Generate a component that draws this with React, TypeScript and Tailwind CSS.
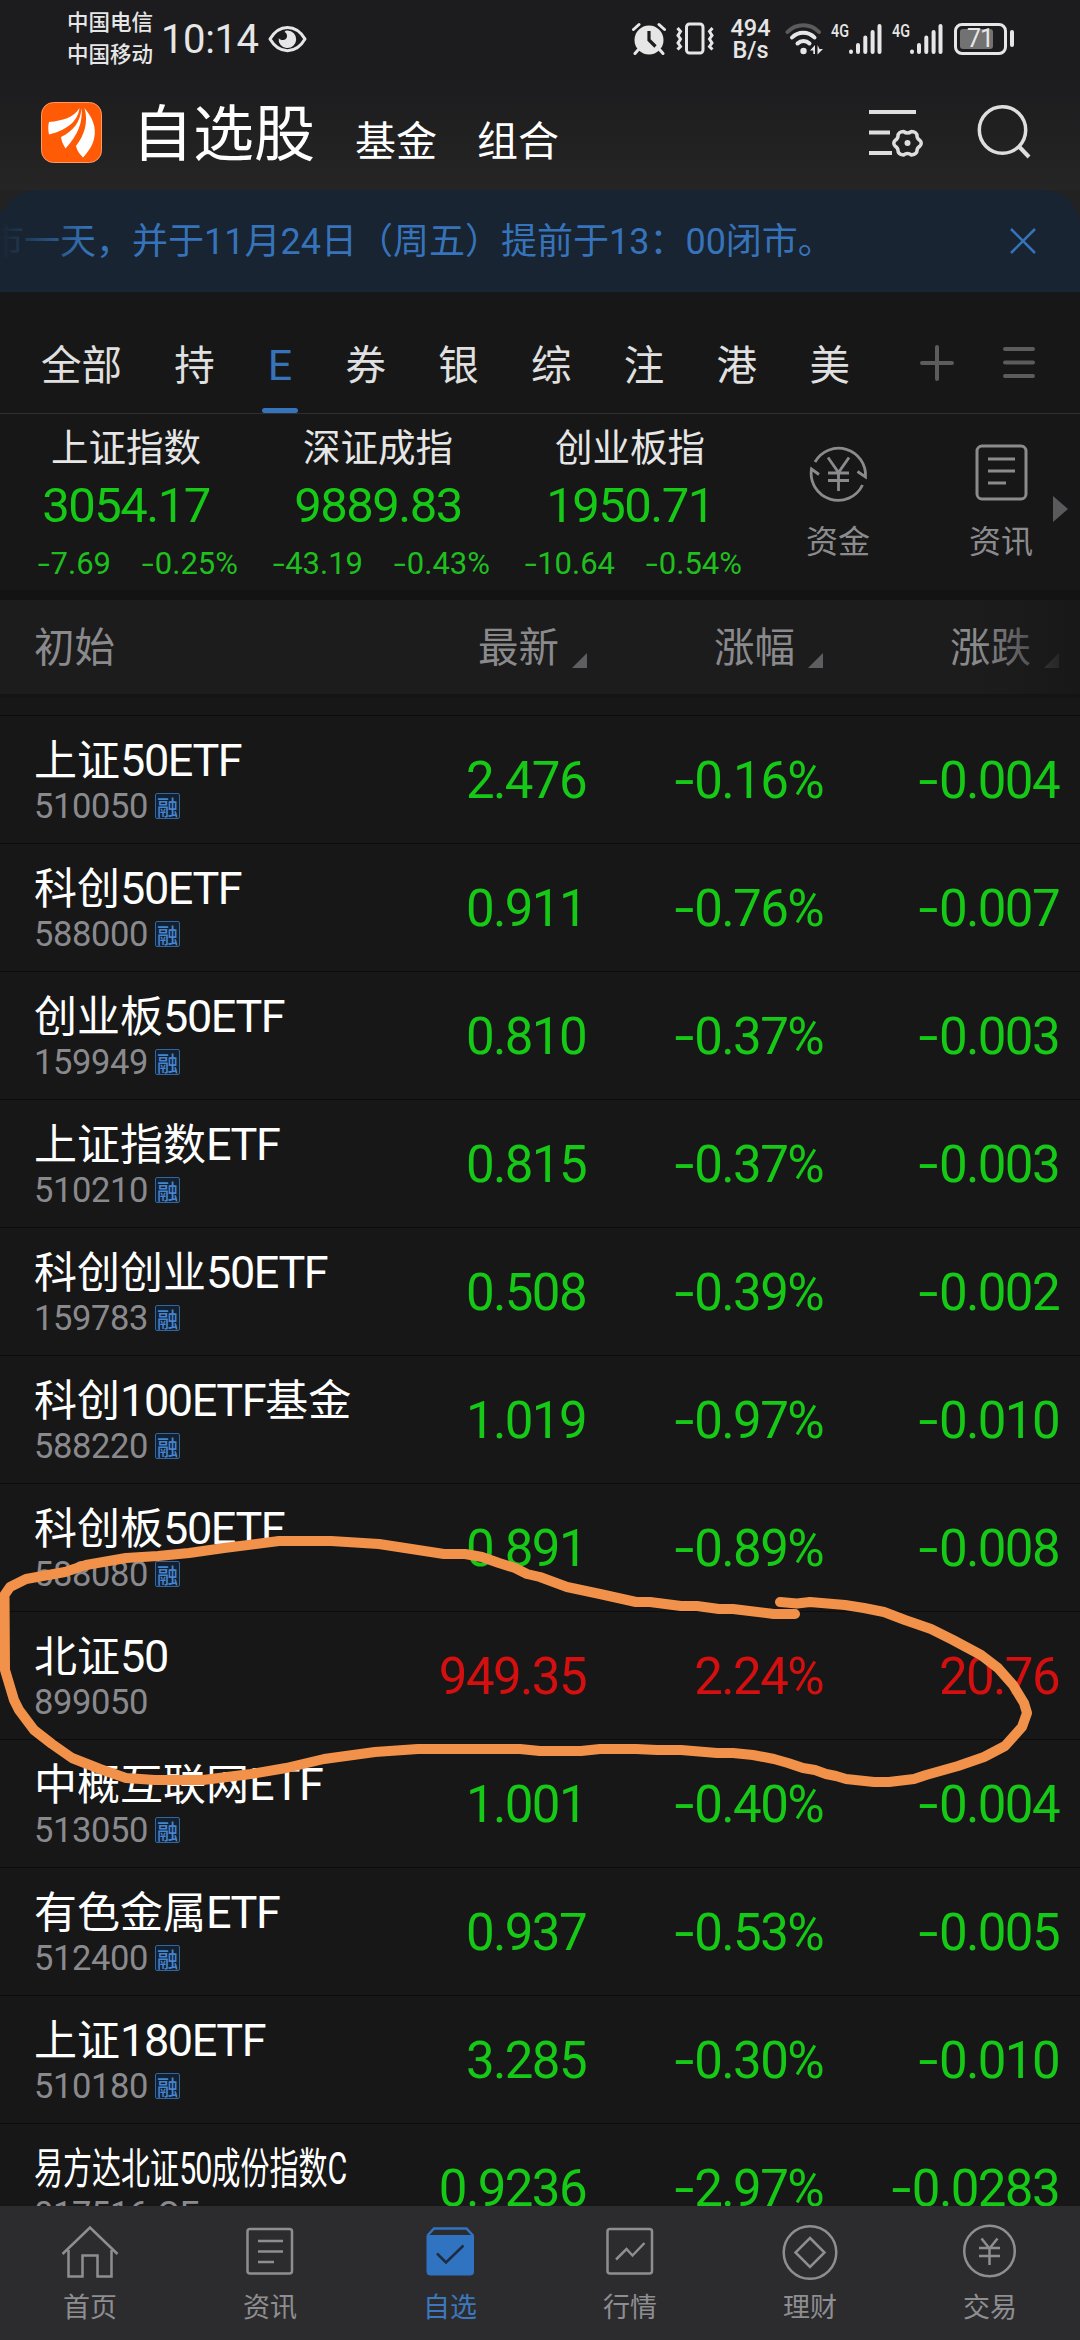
import type { ReactNode } from "react";
import clsx from "clsx";

type Quote = {
  name: string;
  code: string;
  margin?: boolean;
  last: string;
  pct: string;
  diff: string;
  up?: boolean;
  squeeze?: boolean;
};

const QUOTES: Quote[] = [
  { name: "上证50ETF", code: "510050", margin: true, last: "2.476", pct: "-0.16%", diff: "-0.004" },
  { name: "科创50ETF", code: "588000", margin: true, last: "0.911", pct: "-0.76%", diff: "-0.007" },
  { name: "创业板50ETF", code: "159949", margin: true, last: "0.810", pct: "-0.37%", diff: "-0.003" },
  { name: "上证指数ETF", code: "510210", margin: true, last: "0.815", pct: "-0.37%", diff: "-0.003" },
  { name: "科创创业50ETF", code: "159783", margin: true, last: "0.508", pct: "-0.39%", diff: "-0.002" },
  { name: "科创100ETF基金", code: "588220", margin: true, last: "1.019", pct: "-0.97%", diff: "-0.010" },
  { name: "科创板50ETF", code: "588080", margin: true, last: "0.891", pct: "-0.89%", diff: "-0.008" },
  { name: "北证50", code: "899050", last: "949.35", pct: "2.24%", diff: "20.76", up: true },
  { name: "中概互联网ETF", code: "513050", margin: true, last: "1.001", pct: "-0.40%", diff: "-0.004" },
  { name: "有色金属ETF", code: "512400", margin: true, last: "0.937", pct: "-0.53%", diff: "-0.005" },
  { name: "上证180ETF", code: "510180", margin: true, last: "3.285", pct: "-0.30%", diff: "-0.010" },
  { name: "易方达北证50成份指数C", code: "017516.OF", last: "0.9236", pct: "-2.97%", diff: "-0.0283", squeeze: true },
];

const INDEXES = [
  { name: "上证指数", value: "3054.17", diff: "-7.69", pct: "-0.25%" },
  { name: "深证成指", value: "9889.83", diff: "-43.19", pct: "-0.43%" },
  { name: "创业板指", value: "1950.71", diff: "-10.64", pct: "-0.54%" },
];

const GROUPS = ["全部", "持", "E", "券", "银", "综", "注", "港", "美"];

// ---------------------------------------------------------------------
// Status bar
// ---------------------------------------------------------------------
function Signal() {
  return (
    <div className="flex h-8 items-start">
      <span className="w-[17px] origin-left scale-x-[0.8] font-['Roboto',sans-serif] text-[18px] leading-[15px] font-medium">
        4G
      </span>
      <svg width="34" height="32" viewBox="0 0 34 32" stroke="#e6e6e6" strokeWidth="4" strokeLinecap="round">
        <path d="M3 28.5v.5M10 22v7M17.3 14.5V29M24.6 9v20M31.5 3v26" />
      </svg>
    </div>
  );
}

function StatusBar() {
  return (
    <div className="flex h-[76px] shrink-0 items-center pt-[1px] pl-[67px] text-[#e6e6e6]">
      <div className="-mt-[3px] w-[94px] text-[21.5px] leading-8 font-medium">
        <div>中国电信</div>
        <div>中国移动</div>
      </div>
      <div className="w-[107px] pt-[3px] font-['Roboto',sans-serif] text-[40px] leading-none tracking-[-0.4px]">10:14</div>
      <svg width="39" height="28" viewBox="0 0 39 28" fill="none">
        <path d="M2 14C11 -1.500 28 -1.500 37 14C28 29.500 11 29.500 2 14z" stroke="#e6e6e6" strokeWidth="3" strokeLinejoin="round" />
        <path d="M19.500 5.500a8.800 8.800 0 1 1-8.800 7.500c2 3.400 8.800 2.600 8.300-2.500-.2-2-1.200-3-2.500-3.600.8-.9 1.700-1.400 3-1.400z" fill="#e6e6e6" />
      </svg>

      <div className="ml-[325px] flex items-center">
        <svg width="34" height="33" viewBox="0 0 34 33" fill="none">
          <circle cx="17" cy="18" r="14.500" fill="#e6e6e6" />
          <path d="M1.500 7.500L7 2.500M32.500 7.500L27 2.500M6 28l-3 3.500M28 28l3 3.500" stroke="#e6e6e6" strokeWidth="3" strokeLinecap="round" />
          <path d="M17 9v9l6.500 6.500" stroke="#1d1d1f" strokeWidth="3.200" />
        </svg>
        <svg className="ml-[10px]" width="38" height="33" viewBox="0 0 38 33" fill="none" stroke="#e6e6e6" strokeWidth="3">
          <rect x="10.500" y="2" width="16.500" height="29" rx="3" />
          <path d="M1.500 6l3 3.500-2.500 4 2.500 3.500-2.500 4 2.500 3.500-3 3M36.500 6l-3 3.500 2.500 4-2.500 3.500 2.500 4-2.500 3.500 3 3" />
        </svg>
        <div className="ml-[15px] w-[43px] text-center font-['Roboto',sans-serif] text-[23.5px] leading-[22px] font-medium">
          <div>494</div>
          <div>B/s</div>
        </div>
        <svg className="ml-[13px]" width="40" height="34" viewBox="0 0 40 34" fill="none" strokeLinecap="round">
          <path d="M2.500 10C11 1 25.500 1 34 10" stroke="#5b5b5b" strokeWidth="4" />
          <path d="M7 15.500c6-6.500 16.500-6.500 22.500 0" stroke="#e6e6e6" strokeWidth="4" />
          <path d="M12.500 21.500c3.500-3.500 8.500-3.500 12 0" stroke="#e6e6e6" strokeWidth="4" />
          <circle cx="18.500" cy="29" r="3.200" fill="#e6e6e6" />
          <path d="M30 23v9h-1.700v-3.500H25zM32.500 23v9.500l5.500-5.500h-3.500z" fill="#e6e6e6" />
        </svg>
        <div className="ml-[6px] flex gap-[10px]">
          <Signal />
          <Signal />
        </div>
        <div className="ml-[11px] flex items-center gap-[3px]">
          <div className="flex h-8 w-[53px] items-center rounded-lg border-[3px] border-[#e6e6e6] p-[3px]">
            <div className="flex h-full w-[33px] items-center justify-end rounded-[3px] bg-[#727272]">
              <span className="font-['Roboto',sans-serif] text-[25px] leading-none tracking-[-1px]">71</span>
            </div>
          </div>
          <div className="h-[17px] w-1 rounded-full bg-[#e6e6e6]" />
        </div>
      </div>
    </div>
  );
}

// ---------------------------------------------------------------------
// Title bar
// ---------------------------------------------------------------------
function Logo() {
  return (
    <svg width="61" height="61" viewBox="0 0 61 61">
      <rect x=".5" y=".5" width="60" height="60" rx="12" fill="#ff5a05" stroke="#ff9a63" />
      <g fill="#fff">
        <path d="M38.500 6C37 18 28 27.500 8 32.500C7 28 7 23.500 8 20C22 18.500 32 16 38.500 6z" />
        <path d="M40.500 6C42 20 37 33 24.500 46.500C22 42.500 20.500 39 20 35C32 29.500 39.500 20 40.500 6z" />
        <path d="M43.500 6C51 15 56 25 53 37C51.500 44 47 50 42 55.500C38.500 52 36 48.500 35 44C43.500 33 47.500 20 43.500 6z" />
      </g>
    </svg>
  );
}

function TitleBar() {
  return (
    <div className="flex h-[114px] shrink-0 items-start pl-[41px] text-white">
      <div className="pt-[26px]">
        <Logo />
      </div>
      <div className="-mt-[3px] ml-[30px] flex items-baseline">
        <h1 className="text-[61px] leading-[114px]">自选股</h1>
        <span className="ml-[40px] text-[41px]">基金</span>
        <span className="ml-[40px] text-[41px]">组合</span>
      </div>
      <svg className="mt-[33px] ml-[310px]" width="54" height="50" viewBox="0 0 54 50" fill="none" stroke="#dedede">
        <path d="M0 3h47M0 23.500h21M0 44h23" strokeWidth="4" />
        <path
          d="M34.500 22.500q4 3 8 0c3.500 0 5.500 2 5.500 4.500q0 2.500 3 4.500c1.600 1.500 1.600 4 0 5.500q-3 2-3 4.500c0 2.500-2.500 4-5.500 4.500q-4-3-8 0c-3.500-.5-5.500-2-5.500-4.500q0-2.500-3-4.500c-1.600-1.500-1.600-4 0-5.500q3-2 3-4.500c0-2.500 2-4.500 5.500-4.500z"
          strokeWidth="3.500"
          strokeLinejoin="round"
        />
        <circle cx="38.500" cy="34" r="3" fill="#dedede" stroke="none" />
      </svg>
      <svg className="mt-[29px] ml-[54px]" width="54" height="54" viewBox="0 0 54 54" fill="none" stroke="#dedede">
        <circle cx="25.500" cy="25" r="23.200" strokeWidth="3.500" />
        <path d="M41.500 41L52 52" strokeWidth="4" />
      </svg>
    </div>
  );
}

function Notice() {
  return (
    <div className="bg-[#222]">
      <div className="flex h-[102px] items-center rounded-t-[36px] bg-[#182431] text-[#3673ba]">
        <div className="relative w-[960px] overflow-hidden">
          <p className="-ml-[12px] pt-[1px] font-['Roboto','Noto_Sans_CJK_SC',sans-serif] text-[36px] leading-[60px] whitespace-nowrap">
            市一天，并于11月24日（周五）提前于13：00闭市。
          </p>
          <div className="absolute inset-y-0 left-0 w-[90px] bg-linear-to-r from-[#182431] to-[#18243100]" />
        </div>
        <svg className="ml-[50px]" width="26" height="26" viewBox="0 0 26 26" stroke="#3673ba" strokeWidth="2.500">
          <path d="M1 1l24 24M25 1L1 25" />
        </svg>
      </div>
    </div>
  );
}

// ---------------------------------------------------------------------
// Watchlist groups and index strip
// ---------------------------------------------------------------------
function GroupTabs() {
  return (
    <div className="flex h-[122px] shrink-0 border-b border-[#303030] pt-[22px] pl-[41px] text-[#e0e0e0]">
      <div className="flex gap-[52.300px]">
        {GROUPS.map((g) => (
          <div
            key={g}
            className={clsx(
              "flex flex-col items-center text-[40.500px]",
              g === "E" && "w-[26px] font-['Roboto',sans-serif] text-[#3673ba]"
            )}
          >
            <span className={clsx("h-[94px]", g === "E" ? "text-[43px] leading-[102px]" : "leading-[97px]")}>{g}</span>
            {g === "E" && <i className="block h-[5px] w-[36px] shrink-0 rounded-full bg-[#3673ba]" />}
          </div>
        ))}
      </div>
      <svg className="mt-[31px] ml-[69px]" width="36" height="36" viewBox="0 0 36 36" stroke="#5c5c5c" strokeWidth="4" strokeLinecap="round">
        <path d="M18 2v32M3 18h30" />
      </svg>
      <svg className="mt-[31px] ml-[47px]" width="34" height="36" viewBox="0 0 34 36" stroke="#5c5c5c" strokeWidth="4" strokeLinecap="round">
        <path d="M3 4h28M3 17.500h28M3 31h28" />
      </svg>
    </div>
  );
}

// Figures start with a wide minus sign
function Figure({ value }: { value: string }) {
  const negative = value.startsWith("-");
  return (
    <>
      {negative && <span className="inline-block w-[0.44em] scale-x-[1.4] text-center">-</span>}
      <span>{negative ? value.slice(1) : value}</span>
    </>
  );
}

function Shortcut({ label, children }: { label: string; children: ReactNode }) {
  return (
    <div className="flex flex-col items-center gap-[12px] pt-[29px] text-[32px] leading-[50px] text-[#8b8b8e]">
      {children}
      <span>{label}</span>
    </div>
  );
}

function IndexStrip() {
  return (
    <div className="flex h-[176px] shrink-0">
      {INDEXES.map((i) => (
        <div key={i.name} className="flex w-[252px] flex-col font-['Roboto',sans-serif]">
          <span className="pt-[8px] text-center font-['Noto_Sans_CJK_SC',sans-serif] text-[37.500px] leading-[46px] text-[#e6e6e6]">
            {i.name}
          </span>
          <span className="mt-[11px] text-center text-[49px] leading-[54px] tracking-[-1.5px] text-[#16c916]">{i.value}</span>
          <span className="mt-[14px] flex justify-end pr-[14px] text-[31px] leading-[34px] text-[#1fbf1f]">
            <span>
              <Figure value={i.diff} />
            </span>
            <span className="w-[127px] text-right">
              <Figure value={i.pct} />
            </span>
          </span>
        </div>
      ))}
      <div className="ml-[50px] flex gap-[99px]">
        <Shortcut label="资金">
          <svg width="59" height="59" viewBox="0 0 59 59" fill="none" stroke="#8b8b8e" strokeWidth="2.800">
            <path d="M6 19A27 27 0 0 1 56.500 34L48.500 28.500" />
            <path d="M53.500 42A27 27 0 0 1 2.500 26L10 31.500" />
            <path d="M19 14.500l10.500 15L40 14.500M29.500 29.500V48M19 30h21M19 37.500h21" />
          </svg>
        </Shortcut>
        <Shortcut label="资讯">
          <svg width="53" height="59" viewBox="0 0 53 59" fill="none" stroke="#8b8b8e" strokeWidth="3">
            <rect x="2" y="3" width="49" height="53" rx="5" />
            <path d="M13 16h27M13 28h27M13 40h18" />
          </svg>
        </Shortcut>
      </div>
      <svg className="mt-[82px] ml-[20px]" width="15" height="26" viewBox="0 0 15 26">
        <path d="M0 0l15 13L0 26z" fill="#5a5a5c" />
      </svg>
    </div>
  );
}

// ---------------------------------------------------------------------
// Quote table
// ---------------------------------------------------------------------
function SortHead({ label, className }: { label: string; className: string }) {
  return (
    <div className={clsx("flex items-center justify-end gap-[13px]", className)}>
      <span>{label}</span>
      <svg className="mt-[30px]" width="15" height="15" viewBox="0 0 15 15">
        <path d="M15 0v15H0z" fill="#5e5e60" />
      </svg>
    </div>
  );
}

function TableHead() {
  return (
    <div className="relative flex h-[94px] shrink-0 items-center bg-[#1c1c1c] pb-[4px] pl-[34px] text-[40.500px] leading-[60px] text-[#8a8a8d]">
      <div className="w-[343px]">初始</div>
      <SortHead label="最新" className="w-[210px]" />
      <SortHead label="涨幅" className="w-[236px]" />
      <SortHead label="涨跌" className="w-[236px]" />
      <div className="absolute inset-y-0 right-0 w-[100px] bg-linear-to-r from-[#1a1a1a00] to-[#181818]" />
    </div>
  );
}

// Latin runs are set narrower than the Chinese ones
function QuoteName({ name, squeeze }: { name: string; squeeze?: boolean }) {
  const runs = name.split(/([0-9A-Z]+)/).filter(Boolean);
  return (
    <div
      className={clsx(
        "w-fit origin-left text-[43px] leading-[50px] whitespace-nowrap text-white",
        squeeze && "scale-x-[0.675]"
      )}
    >
      {runs.map((r) =>
        /[0-9A-Z]/.test(r) ? (
          <span key={r} className="font-['Roboto',sans-serif] text-[45px] tracking-[-1.4px]">
            {r}
          </span>
        ) : (
          <span key={r}>{r}</span>
        )
      )}
    </div>
  );
}

function Cell({ value, className }: { value: string; className: string }) {
  return (
    <div className={clsx("pt-[2px] text-right font-['Roboto',sans-serif] text-[51px] tracking-[-1.6px]", className)}>
      <Figure value={value} />
    </div>
  );
}

function QuoteRow({ q }: { q: Quote }) {
  return (
    <div className="flex h-32 shrink-0 items-center border-t border-[#0c0c0c] pl-[34px]">
      <div className="h-full w-[341px] pt-[16px]">
        <QuoteName name={q.name} squeeze={q.squeeze} />
        <div className="mt-[1px] flex items-center gap-[7px] text-[#8a8a8e]">
          <span className="font-['Roboto',sans-serif] text-[34.500px] leading-[38px] tracking-[-0.4px]">{q.code}</span>
          {q.margin && (
            <span className="flex h-[26px] w-[25px] items-center justify-center rounded-[2px] border border-[#35659c] bg-[#122033] text-[21px] leading-none font-medium text-[#4585cc]">
              融
            </span>
          )}
        </div>
      </div>
      <div className={clsx("flex leading-[60px]", q.up ? "text-[#d40f0f]" : "text-[#16c916]")}>
        <Cell value={q.last} className="w-[211px]" />
        <Cell value={q.pct} className="w-[237px]" />
        <Cell value={q.diff} className="w-[236px]" />
      </div>
    </div>
  );
}

// Freehand marker loop around the 北证50 row
function MarkerLoop() {
  return (
    <svg className="pointer-events-none absolute inset-0" width="1080" height="2340" viewBox="0 0 1080 2340" fill="none">
      <path
        d="M780 1602L797 1603.500L810 1602L845 1605L864 1608L884 1612L905 1620L931 1629L953 1640L981 1655L998 1668L1013 1685L1024 1703L1027 1713L1022 1727L1005 1746L984 1757L958 1766L926 1775L914 1779L889 1782L874 1782L846 1779L836 1776L826 1774L815 1770L803 1768L788 1763L774 1759L753 1755L733 1753L717 1753L681 1750L657 1750L636 1749L600 1749L581 1751L540 1751L520 1749L418 1749L375 1752L324 1759L286 1768L251 1774L203 1780L155 1780L126 1778L100 1769L72 1758L52 1744L34 1730L19 1710L14 1700L5 1670L4.500 1595L10 1587L26 1579L65 1572L86 1565L126 1558L158 1556L189 1553L224 1548L279 1541L331 1541L379 1544L444 1554L465 1554L482 1557L499 1563L515 1568L527 1574L540 1577L567 1587L600 1594L636 1602L650 1602L681 1606L697 1606L719 1609L733 1609L774 1614L795 1614"
        stroke="#f2924a"
        strokeWidth="10"
        strokeLinecap="round"
        strokeLinejoin="round"
      />
    </svg>
  );
}

// ---------------------------------------------------------------------
// Bottom navigation
// ---------------------------------------------------------------------
const NAV: { label: string; active?: boolean; icon: ReactNode }[] = [
  {
    label: "首页",
    icon: <path d="M2.500 30L30 3.500L57.500 30M8.500 26v26.500h14V31.500h15v21h14V26" />,
  },
  {
    label: "资讯",
    icon: (
      <>
        <rect x="7.500" y="5" width="44.500" height="44.500" rx="2.500" />
        <path d="M18 17h25M18 27.500h25M18 38h16" />
      </>
    ),
  },
  {
    label: "自选",
    active: true,
    icon: (
      <>
        <path d="M7 11.500h46.500v36.500a3 3 0 0 1-3 3h-40.500a3 3 0 0 1-3-3z" fill="#3073c0" stroke="#3073c0" strokeWidth="1" />
        <path d="M7.500 11.500l6.500-7h32.500l6.500 7" stroke="#3073c0" strokeWidth="2.500" />
        <path d="M17 29.500l9 9L43.500 21.500" stroke="#1d2c40" />
      </>
    ),
  },
  {
    label: "行情",
    icon: (
      <>
        <rect x="7.500" y="5" width="44.500" height="44.500" rx="2.500" />
        <path d="M16 35.500L26.500 25l6 6.500L44.500 19" />
      </>
    ),
  },
  {
    label: "理财",
    icon: (
      <>
        <circle cx="30" cy="28.500" r="26.300" />
        <path d="M30 14L44.500 28.500L30 43L15.500 28.500z" />
      </>
    ),
  },
  {
    label: "交易",
    icon: (
      <>
        <circle cx="29.500" cy="27" r="25.300" />
        <path d="M21.500 14.500l8 10 8-10M29.500 24.500V41M19 24h21M19 32h21" />
      </>
    ),
  },
];

function BottomNav() {
  return (
    <nav className="flex h-[134px] shrink-0 bg-[#2c2c2e]">
      {NAV.map((n) => (
        <div
          key={n.label}
          className={clsx(
            "flex w-[180px] flex-col items-center pt-[18px] text-[27px] leading-[44px]",
            n.active ? "text-[#3b78bd]" : "text-[#8e8e91]"
          )}
        >
          <svg width="60" height="57" viewBox="0 0 60 57" fill="none" stroke="currentColor" strokeWidth="2.500">
            {n.icon}
          </svg>
          <span className="mt-[3px]">{n.label}</span>
        </div>
      ))}
    </nav>
  );
}

export default function App() {
  return (
    <div className="relative flex h-[2340px] w-[1080px] flex-col overflow-hidden bg-[#171717] font-['Noto_Sans_CJK_SC',sans-serif]">
      <header className="shrink-0 bg-linear-to-b from-[#1c1c1e] from-40% to-[#252525]">
        <StatusBar />
        <TitleBar />
      </header>
      <Notice />
      <GroupTabs />
      <IndexStrip />
      <div className="h-[10px] shrink-0 bg-[#131313]" />
      <TableHead />
      <div className="h-[21px] shrink-0 border-t-4 border-[#141414]" />
      <main className="min-h-0 flex-1 overflow-hidden">
        {QUOTES.map((q) => (
          <QuoteRow key={q.code} q={q} />
        ))}
      </main>
      <BottomNav />
      <MarkerLoop />
    </div>
  );
}
